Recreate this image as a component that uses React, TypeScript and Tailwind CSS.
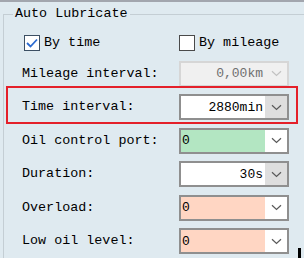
import type { ReactNode } from 'react';

const font = { fontFamily: '"Liberation Mono", "DejaVu Sans Mono", monospace' };

function Chevron({ color = '#5a5a5a' }: { color?: string }) {
  return (
    <svg width="11" height="7" viewBox="0 0 11 7" fill="none">
      <path d="M1 1.2 L5.5 5.5 L10 1.2" stroke={color} strokeWidth="1.2" />
    </svg>
  );
}

interface ComboProps {
  value: string;
  align?: 'left' | 'right';
  fill?: string;
  btn?: string;
  disabled?: boolean;
}

function Combo({ value, align = 'right', fill = 'bg-white', btn = 'bg-[#dedede]', disabled }: ComboProps) {
  return (
    <div
      className={`flex h-[26px] w-[110px] border-2 ${
        disabled ? 'border-[#d6d6d6] bg-[#f0f0f0]' : `border-[#8f8f8f] ${fill}`
      }`}
    >
      <div
        className={`flex flex-1 items-center px-[1px] text-[13px] ${
          align === 'right' ? 'justify-end pr-[2px]' : 'justify-start'
        } ${disabled ? 'text-[#6f6f6f]' : 'text-black'}`}
      >
        {value}
      </div>
      <div className={`flex w-[22px] items-center justify-center ${disabled ? 'bg-[#f0f0f0]' : btn}`}>
        <Chevron color={disabled ? '#c2c2c2' : '#5a5a5a'} />
      </div>
    </div>
  );
}

function Row({ label, children }: { label: string; children: ReactNode }) {
  return (
    <div className="relative flex h-[33.5px] items-center pl-[18px]">
      <span className="w-[157px] text-[13.4px] text-black">{label}</span>
      {children}
    </div>
  );
}

function Check({ checked, label }: { checked?: boolean; label: string }) {
  return (
    <div className="flex items-center gap-[4px]">
      <span
        className={`flex h-[16px] w-[16px] items-center justify-center border bg-white ${
          checked ? 'border-[#3c4f63]' : 'border-[#4a4a4a]'
        }`}
      >
        {checked && (
          <svg width="12" height="10" viewBox="0 0 12 10" fill="none">
            <path d="M1 5 L4.5 8.5 L11 1.5" stroke="#2a6ad0" strokeWidth="1.8" />
          </svg>
        )}
      </span>
      <span className="text-[13.4px] text-black">{label}</span>
    </div>
  );
}

export default function App() {
  return (
    <div className="h-[258px] w-[304px] overflow-hidden border-t-2 border-[#a2a6ae] bg-[#dfeaf0]" style={font}>
      <fieldset className="ml-[3px] mt-[3px] border-l border-t border-[#c4ced4] border-r-0 border-b-0">
        <legend className="ml-[9px] px-[2px] text-[13.4px] leading-[18px] text-black">Auto Lubricate</legend>

        <div className="flex h-[34px] items-center pl-[20px] pt-[7px]">
          <div className="w-[155px]">
            <Check checked label="By time" />
          </div>
          <Check label="By mileage" />
        </div>

        <Row label="Mileage interval:">
          <Combo value="0,00km" disabled />
        </Row>

        <Row label="Time interval:">
          <Combo value="2880min" />
          <span className="pointer-events-none absolute left-[2px] top-[-4.5px] h-[38px] w-[292px] border-2 border-[#e4202a]" />
        </Row>

        <Row label="Oil control port:">
          <Combo value="0" align="left" fill="bg-[#b3e6c2]" btn="bg-white" />
        </Row>

        <Row label="Duration:">
          <Combo value="30s" />
        </Row>

        <Row label="Overload:">
          <Combo value="0" align="left" fill="bg-[#ffd6c3]" btn="bg-white" />
        </Row>

        <div className="flex h-[33.5px] items-center pl-[18px]">
          <span className="w-[157px] text-[13.4px] text-black">Low oil level:</span>
          <Combo value="0" align="left" fill="bg-[#ffd6c3]" btn="bg-white" />
          <span className="ml-[9px] h-[10px] w-[3px] self-end bg-black" />
        </div>
      </fieldset>
    </div>
  );
}
